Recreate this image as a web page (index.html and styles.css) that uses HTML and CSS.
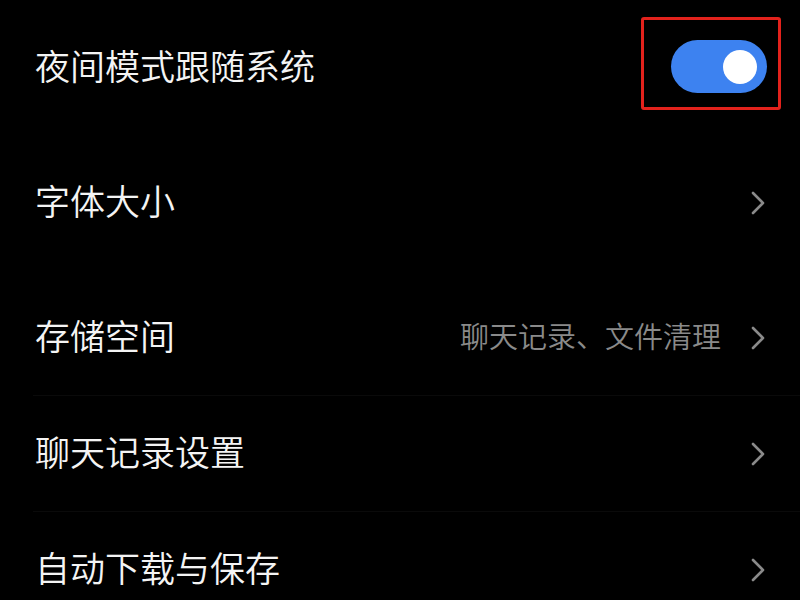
FILE: index.html
```html
<!DOCTYPE html>
<html lang="zh-CN">
<head>
<meta charset="utf-8">
<link rel="stylesheet" href="styles.css">
</head>
<body>
<div class="list">
  <div class="row row-first">
    <span class="label">夜间模式跟随系统</span>
    <div class="toggle">
      <span class="knob"></span>
      <span class="mark"></span>
    </div>
  </div>
  <div class="row row-gap">
    <span class="label">字体大小</span>
    <svg class="chev" width="14" height="24" viewBox="0 0 14 24"><path d="M2 2 L12 12 L2 22" fill="none" stroke="#8a8a8a" stroke-width="2.6" stroke-linecap="round" stroke-linejoin="round"/></svg>
  </div>
  <div class="row row-gap">
    <span class="label">存储空间</span>
    <span class="sub">聊天记录、文件清理</span>
    <svg class="chev" width="14" height="24" viewBox="0 0 14 24"><path d="M2 2 L12 12 L2 22" fill="none" stroke="#8a8a8a" stroke-width="2.6" stroke-linecap="round" stroke-linejoin="round"/></svg>
  </div>
  <div class="row row-line">
    <span class="label">聊天记录设置</span>
    <svg class="chev" width="14" height="24" viewBox="0 0 14 24"><path d="M2 2 L12 12 L2 22" fill="none" stroke="#8a8a8a" stroke-width="2.6" stroke-linecap="round" stroke-linejoin="round"/></svg>
  </div>
  <div class="row row-line">
    <span class="label">自动下载与保存</span>
    <svg class="chev" width="14" height="24" viewBox="0 0 14 24"><path d="M2 2 L12 12 L2 22" fill="none" stroke="#8a8a8a" stroke-width="2.6" stroke-linecap="round" stroke-linejoin="round"/></svg>
  </div>
</div>
</body>
</html>
```
FILE: styles.css
```css
html, body {
  margin: 0;
  padding: 0;
  background: #000;
  overflow: hidden;
}
body {
  width: 800px;
  height: 600px;
  font-family: "Noto Sans CJK SC", "Noto Sans", sans-serif;
}
.list {
  display: flex;
  flex-direction: column;
  padding-top: 10px;
}
.row {
  display: flex;
  align-items: center;
  height: 115px;
  margin-left: 33px;
  padding-left: 2px;
  padding-right: 35px;
  box-sizing: border-box;
}
.row-first {
  padding-right: 33px;
}
.row-gap {
  margin-top: 20px;
}
.row-line {
  border-top: 1px solid #0a0a0a;
  height: 116px;
}
.label {
  flex: 1;
  color: #f4f4f4;
  font-size: 35px;
  font-weight: 350;
  line-height: 1;
  padding-bottom: 6px;
  white-space: nowrap;
}
.sub {
  color: #8a8a8a;
  font-size: 29px;
  font-weight: 350;
  line-height: 1;
  padding-bottom: 5px;
  margin-right: 30px;
  white-space: nowrap;
}
.chev {
  display: block;
  flex: none;
}
.toggle {
  position: relative;
  width: 96px;
  height: 53px;
  border-radius: 27px;
  background: #3d82f0;
  display: flex;
  align-items: center;
  justify-content: flex-end;
  padding-right: 10px;
  box-sizing: border-box;
  margin-top: -2px;
}
.knob {
  width: 34px;
  height: 34px;
  border-radius: 50%;
  background: #fff;
}
.mark {
  position: absolute;
  left: -30px;
  top: -23px;
  right: -14px;
  bottom: -17px;
  border: 3px solid #e3221c;
  border-radius: 3px;
}
```
